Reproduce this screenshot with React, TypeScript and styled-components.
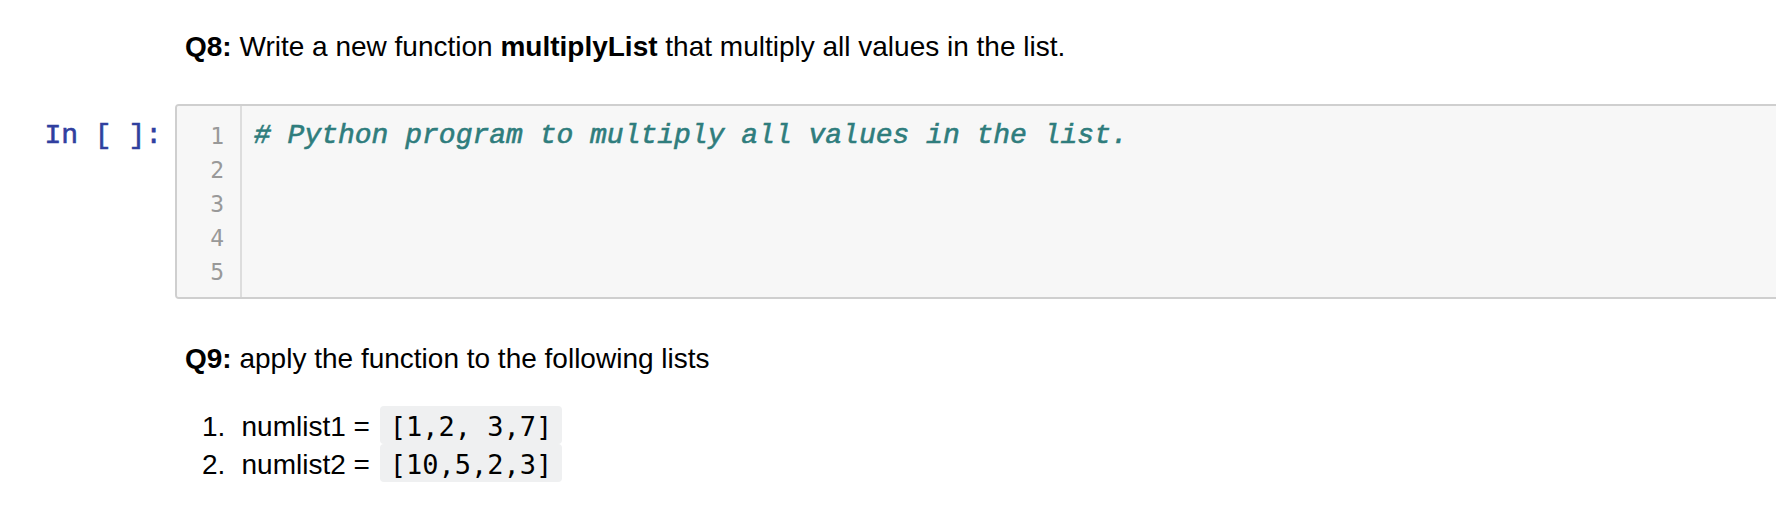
import React from "react";
import styled, { createGlobalStyle } from "styled-components";

const GlobalStyle = createGlobalStyle`
  html, body {
    margin: 0;
    padding: 0;
    background: #ffffff;
    overflow: hidden;
  }
  body {
    font-family: "Liberation Sans", Arial, Helvetica, sans-serif;
    color: #000000;
  }
`;

const Page = styled.div`
  display: flex;
  flex-direction: column;
  padding-top: 27px;
  width: 100%;
`;

const CellRow = styled.div<{ $top?: number }>`
  display: flex;
  flex-direction: row;
  align-items: flex-start;
  margin-top: ${(p) => p.$top ?? 0}px;
`;

const PromptArea = styled.div`
  flex: 0 0 175px;
  width: 175px;
  box-sizing: border-box;
  padding: 15px 13px 0 0;
  text-align: right;
  font-family: "Liberation Mono", "Courier New", monospace;
  font-size: 28px;
  line-height: 34px;
  color: #303f9f;
  white-space: pre;
  -webkit-text-stroke: 0.6px #303f9f;
`;

const Markdown = styled.div`
  flex: 1;
  padding-left: 10px;
  font-size: 28px;
  color: #000000;
`;

const Para = styled.p`
  margin: 0;
  line-height: 40px;
`;

const Strong = styled.b`
  font-weight: 700;
`;

const InputArea = styled.div`
  flex: 1;
  display: flex;
  flex-direction: row;
  margin-right: -20px;
  background: #f7f7f7;
  border: 2px solid #cfcfcf;
  border-radius: 4px;
  overflow: hidden;
`;

const Gutter = styled.div`
  flex: 0 0 65px;
  width: 65px;
  box-sizing: border-box;
  background: #f7f7f7;
  border-right: 2px solid #dddddd;
  padding: 13px 16px 8px 0;
  display: flex;
  flex-direction: column;
  align-items: flex-end;
  font-family: "DejaVu Sans Mono", Menlo, monospace;
  font-size: 23px;
  line-height: 34px;
  color: #999999;
`;

const LineNumber = styled.div`
  height: 34px;
`;

const Editor = styled.div`
  flex: 1;
  padding: 13px 6px 8px 12px;
  font-family: "Liberation Mono", "Courier New", monospace;
  font-size: 28px;
  line-height: 34px;
  color: #000000;
`;

const CodeLine = styled.div`
  height: 34px;
  white-space: pre;
`;

const Comment = styled.span`
  color: #2f7d7d;
  font-style: italic;
  -webkit-text-stroke: 0.6px #2f7d7d;
`;

const List = styled.ol`
  list-style: none;
  margin: 29px 0 0 0;
  padding: 0 0 0 17px;
  display: flex;
  flex-direction: column;
`;

const Item = styled.li`
  display: flex;
  flex-direction: row;
  line-height: 38px;
  height: 38px;
`;

const Marker = styled.span`
  flex: 0 0 39.5px;
  width: 39.5px;
`;

const InlineCode = styled.code`
  font-family: "DejaVu Sans Mono", Menlo, monospace;
  font-size: 27px;
  background: #eff0f1;
  border-radius: 4px;
  padding: 5px 10px 2px 10px;
  margin-left: 2px;
  white-space: pre;
`;

const lines = [1, 2, 3, 4, 5];

export default function App() {
  return (
    <>
      <GlobalStyle />
      <Page>
        <CellRow>
          <PromptArea />
          <Markdown>
            <Para>
              <Strong>Q8:</Strong> Write a new function <Strong>multiplyList</Strong> that
              multiply all values in the list.
            </Para>
          </Markdown>
        </CellRow>

        <CellRow $top={37}>
          <PromptArea>In [ ]:</PromptArea>
          <InputArea>
            <Gutter>
              {lines.map((n) => (
                <LineNumber key={n}>{n}</LineNumber>
              ))}
            </Gutter>
            <Editor>
              <CodeLine>
                <Comment># Python program to multiply all values in the list.</Comment>
              </CodeLine>
              <CodeLine />
              <CodeLine />
              <CodeLine />
              <CodeLine />
            </Editor>
          </InputArea>
        </CellRow>

        <CellRow $top={40}>
          <PromptArea />
          <Markdown>
            <Para>
              <Strong>Q9:</Strong> apply the function to the following lists
            </Para>
            <List>
              <Item>
                <Marker>1.</Marker>
                <span>
                  numlist1 = <InlineCode>[1,2, 3,7]</InlineCode>
                </span>
              </Item>
              <Item>
                <Marker>2.</Marker>
                <span>
                  numlist2 = <InlineCode>[10,5,2,3]</InlineCode>
                </span>
              </Item>
            </List>
          </Markdown>
        </CellRow>
      </Page>
    </>
  );
}
